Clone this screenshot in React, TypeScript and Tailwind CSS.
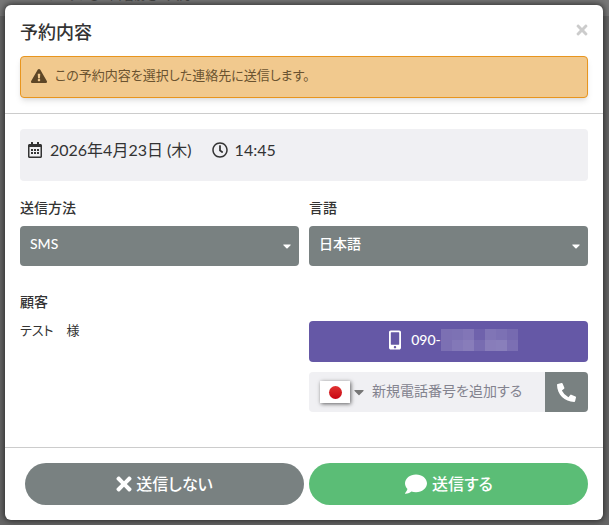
import React from "react";
import {
  FaExclamationTriangle,
  FaRegCalendarAlt,
  FaRegClock,
  FaMobileAlt,
  FaPhoneAlt,
  FaTimes,
  FaComment,
  FaCaretDown,
} from "react-icons/fa";

function SelectField({ id, label, options }: { id: string; label: string; options: string[] }) {
  return (
    <div>
      <label htmlFor={id} className="block text-sm font-medium leading-5">
        {label}
      </label>
      <div className="relative mt-2">
        <select
          id={id}
          className="block h-10 w-full appearance-none rounded bg-[#798181] pr-6 pb-1 pl-2.5 text-sm font-medium text-white"
        >
          {options.map((o) => (
            <option key={o}>{o}</option>
          ))}
        </select>
        <FaCaretDown className="pointer-events-none absolute top-3 right-2 h-4 w-2 text-white" />
      </div>
    </div>
  );
}

const mosaic = [
  "bg-[#7c70b3]", "bg-[#7d72b4]", "bg-[#8276b7]", "bg-[#6f62ac]", "bg-[#8075b6]", "bg-[#7c71b4]", "bg-[#766ab0]",
  "bg-[#7c70b3]", "bg-[#8378b8]", "bg-[#887dba]", "bg-[#786cb1]", "bg-[#887dba]", "bg-[#897fbb]", "bg-[#7b6fb3]",
];

export default function App() {
  return (
    <div className="relative min-h-screen overflow-hidden bg-[#666] p-[5px] pr-1.5 font-['Lato','Noto_Sans_CJK_JP',sans-serif] text-[#333] [font-feature-settings:'palt']">
      <div className="absolute inset-x-0 top-0 h-4 bg-[#777]">
        <p className="absolute bottom-3 left-12 text-xs leading-4 whitespace-nowrap text-[#444]">
          クリックして出名前をご入力
        </p>
      </div>

      <div
        role="dialog"
        aria-labelledby="title"
        className="relative rounded-md bg-white shadow-[0_0_6px_1px_rgba(0,0,0,0.6)]"
      >
        <header className="border-b border-[#ccc] p-[15px]">
          <div className="flex h-6 items-start justify-between">
            <h1 id="title" className="text-lg leading-6 font-medium">
              予約内容
            </h1>
            <button aria-label="閉じる" className="pt-0.5 text-[#ccc]">
              <FaTimes className="h-4 w-3" />
            </button>
          </div>
          <div
            role="alert"
            className="mt-3 flex h-[42px] items-center gap-2 rounded border border-[#e8951e] bg-[#f1c98e] px-2.5 pb-0.5 text-[13px] text-[#6a5330] shadow-md"
          >
            <FaExclamationTriangle className="h-4 w-4 text-[#5d4626]" />
            <span>この予約内容を選択した連絡先に送信します。</span>
          </div>
        </header>

        <main className="px-[15px] pt-[15px] pb-[35px]">
          <div className="flex h-[52px] items-start rounded bg-[#f0f0f3] px-[7px] pt-[9px]">
            <div className="flex items-center gap-[7px] leading-6">
              <FaRegCalendarAlt className="h-4 w-4" />
              <time>2026年4月23日 (木)</time>
            </div>
            <div className="ml-5 flex items-center gap-[7px] leading-6">
              <FaRegClock className="h-4 w-4" />
              <time>14:45</time>
            </div>
          </div>

          <div className="mt-[17px] grid grid-cols-2 gap-2.5">
            <SelectField id="method" label="送信方法" options={["SMS"]} />
            <SelectField id="language" label="言語" options={["日本語"]} />
          </div>

          <div className="mt-6 grid grid-cols-2 gap-2.5">
            <section>
              <h2 className="text-sm leading-6 font-medium">顧客</h2>
              <p className="mt-1 text-[13px] leading-6">テスト　様</p>
            </section>
            <section className="pt-[31px]">
              <button className="flex h-[41px] w-full items-center justify-center gap-2.5 rounded bg-[#6558a6] pb-1 pl-2.5 text-sm font-medium text-white">
                <FaMobileAlt className="h-5 w-3" />
                <span className="flex items-center">
                  090-
                  <span className="grid grid-cols-7">
                    {mosaic.map((c, i) => (
                      <span key={i} className={`h-[11px] w-[11px] ${c}`} />
                    ))}
                  </span>
                </span>
              </button>
              <div className="mt-2.5 flex h-10 overflow-hidden rounded bg-[#f0f0f3]">
                <button aria-label="国番号" className="flex items-center gap-1 pl-[11px] text-[#777]">
                  <span className="flex h-[22px] w-[30px] items-center justify-center bg-white shadow-[1px_1px_4px_rgba(0,0,0,0.6)]">
                    <span className="h-[13px] w-[13px] rounded-full bg-linear-to-b from-[#e03030] to-[#c80012]" />
                  </span>
                  <FaCaretDown className="h-4 w-2.5" />
                </button>
                <input
                  type="tel"
                  aria-label="新規電話番号"
                  placeholder="新規電話番号を追加する"
                  className="min-w-0 flex-1 bg-transparent pb-0.5 pl-2 text-sm placeholder:text-[#83838f]"
                />
                <button
                  aria-label="電話番号を追加"
                  className="flex w-[43px] items-center justify-center bg-[#798181] text-white"
                >
                  <FaPhoneAlt className="h-[19px] w-[19px]" />
                </button>
              </div>
            </section>
          </div>
        </main>

        <footer className="flex gap-[5px] border-t border-[#ccc] py-[15px] pr-[15px] pl-5 font-medium text-white">
          <button className="flex h-[42px] flex-1 items-center justify-center gap-1 rounded-full bg-[#798181]">
            <FaTimes className="h-[22px] w-4" />
            送信しない
          </button>
          <button className="flex h-[42px] flex-1 items-center justify-center gap-1 rounded-full bg-[#5bbd76]">
            <FaComment className="h-[22px] w-6" />
            送信する
          </button>
        </footer>
      </div>
    </div>
  );
}
